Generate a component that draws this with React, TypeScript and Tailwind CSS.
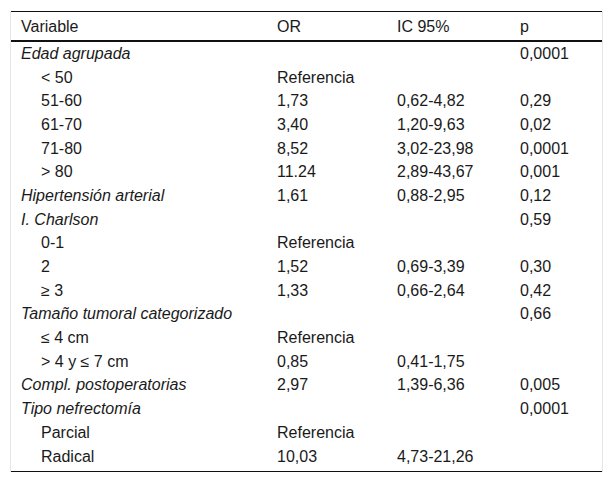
type Row = {
  label: string;
  group?: boolean;
  or?: string;
  ic?: string;
  p?: string;
};

const rows: Row[] = [
  { label: "Edad agrupada", group: true, p: "0,0001" },
  { label: "< 50", or: "Referencia" },
  { label: "51-60", or: "1,73", ic: "0,62-4,82", p: "0,29" },
  { label: "61-70", or: "3,40", ic: "1,20-9,63", p: "0,02" },
  { label: "71-80", or: "8,52", ic: "3,02-23,98", p: "0,0001" },
  { label: "> 80", or: "11.24", ic: "2,89-43,67", p: "0,001" },
  { label: "Hipertensión arterial", group: true, or: "1,61", ic: "0,88-2,95", p: "0,12" },
  { label: "I. Charlson", group: true, p: "0,59" },
  { label: "0-1", or: "Referencia" },
  { label: "2", or: "1,52", ic: "0,69-3,39", p: "0,30" },
  { label: "≥ 3", or: "1,33", ic: "0,66-2,64", p: "0,42" },
  { label: "Tamaño tumoral categorizado", group: true, p: "0,66" },
  { label: "≤ 4 cm", or: "Referencia" },
  { label: "> 4 y ≤ 7 cm", or: "0,85", ic: "0,41-1,75" },
  { label: "Compl. postoperatorias", group: true, or: "2,97", ic: "1,39-6,36", p: "0,005" },
  { label: "Tipo nefrectomía", group: true, p: "0,0001" },
  { label: "Parcial", or: "Referencia" },
  { label: "Radical", or: "10,03", ic: "4,73-21,26" },
];

const cols = "grid grid-cols-[256px_120px_123px_1fr]";

const App = () => {
  return (
    <div className="min-h-screen bg-white px-[10px] pt-[11px] font-['Liberation_Sans',Arial,sans-serif] text-[16px] text-[#1a1a1a]">
      <div className="border-x border-[#e6e6e6]">
        <div className={`${cols} h-[31px] items-center border-t border-b-2 border-t-[#111] border-b-[#111] pt-[2px] leading-none`}>
          <div className="px-[10px]">Variable</div>
          <div className="px-[10px]">OR</div>
          <div className="px-[10px]">IC 95%</div>
          <div className="px-[10px]">p</div>
        </div>
        <div className="border-b border-[#111] pb-[3px]">
          {rows.map((r, i) => (
            <div key={i} className={`${cols} h-[23.7px] items-center leading-none`}>
              <div className={r.group ? "px-[10px] italic" : "pl-[30px] pr-[10px]"}>{r.label}</div>
              <div className="px-[10px]">{r.or}</div>
              <div className="px-[10px]">{r.ic}</div>
              <div className="px-[10px]">{r.p}</div>
            </div>
          ))}
        </div>
      </div>
    </div>
  );
};

export default App;
